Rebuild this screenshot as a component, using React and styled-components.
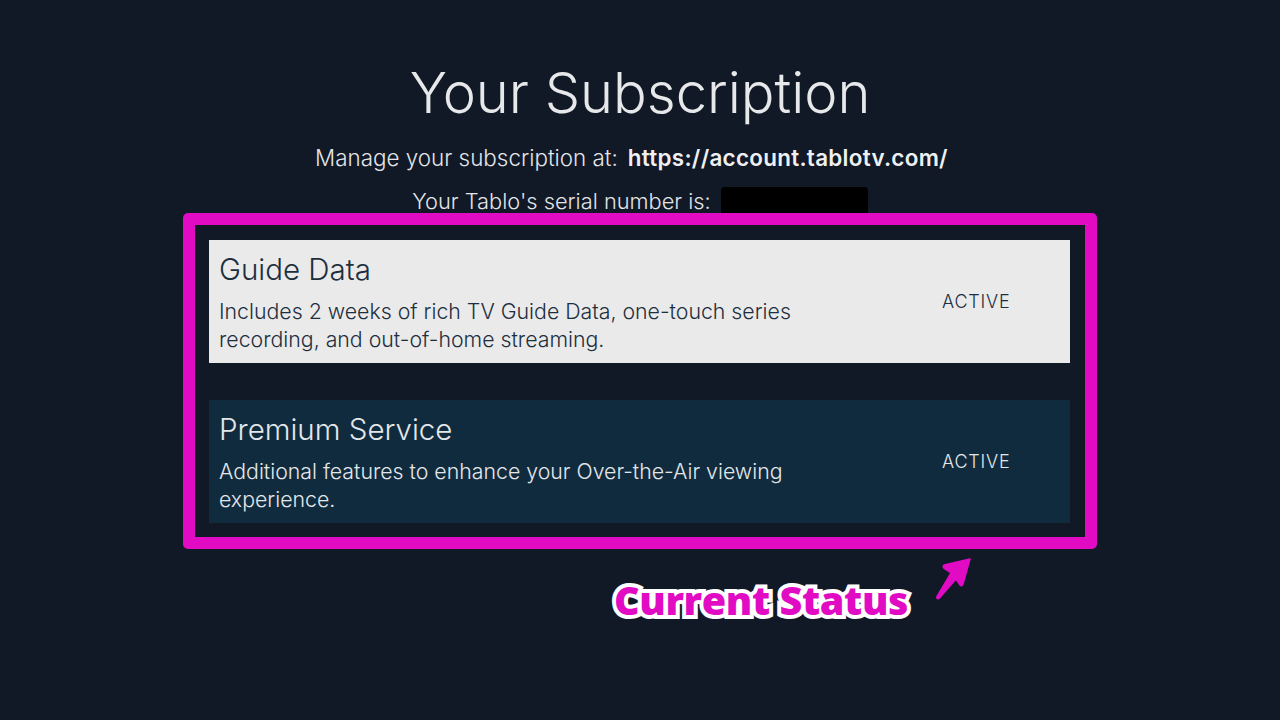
import React from "react";
import styled, { createGlobalStyle } from "styled-components";

const Global = createGlobalStyle`
  html, body { margin: 0; padding: 0; background: #111826; }
  body { font-family: Inter, "Noto Sans", sans-serif; }
`;

const Page = styled.div`
  width: 1280px;
  height: 720px;
  background: #111826;
  display: flex;
  flex-direction: column;
  align-items: center;
  overflow: hidden;
`;

const Title = styled.h1`
  margin: 55px 0 0;
  font-family: Inter, sans-serif;
  font-weight: 300;
  font-size: 56px;
  line-height: 76px;
  color: #e6e8ea;
`;

const InfoLine = styled.div`
  margin-top: ${p => p.$top}px;
  padding-right: ${p => p.$shift || 0}px;
  display: flex;
  align-items: center;
  gap: ${p => p.$gap}px;
  font-size: ${p => p.$size}px;
  line-height: 28px;
  font-weight: 300;
  color: #e3e5e8;
`;

const Url = styled.span`
  font-weight: 600;
  color: #eef0f2;
  letter-spacing: 0.3px;
`;

const Redacted = styled.span`
  display: inline-block;
  width: 147px;
  height: 28px;
  background: #000;
  border-radius: 4px;
`;

const Highlight = styled.div`
  margin-top: -2px;
  width: 861px;
  border: 12px solid #e20bc4;
  border-radius: 5px;
  padding: 15px 15px 14px 14px;
  display: flex;
  flex-direction: column;
  gap: 37px;
  position: relative;
  z-index: 1;
`;

const Card = styled.div`
  height: 123px;
  box-sizing: border-box;
  background: ${p => (p.$dark ? "#112b3e" : "#eaeaea")};
  color: ${p => (p.$dark ? "#e4e7ea" : "#1d2f3f")};
  display: flex;
  align-items: flex-start;
  padding: 12px 10px 0;
`;

const CardText = styled.div`
  flex: 1;
  display: flex;
  flex-direction: column;
`;

const CardTitle = styled.div`
  font-size: 29.5px;
  font-weight: 300;
  line-height: 34px;
`;

const CardDesc = styled.div`
  margin-top: 11px;
  font-size: 21.3px;
  font-weight: 300;
  line-height: 28px;
  max-width: 620px;
`;

const Status = styled.div`
  align-self: center;
  margin-top: -12px;
  width: 118px;
  font-size: 18px;
  font-weight: 300;
  letter-spacing: 0.8px;
`;

const Annotation = styled.div`
  align-self: stretch;
  display: flex;
  align-items: flex-start;
  margin: 26px 0 0 614px;
  gap: 21px;
`;

const Label = styled.span`
  font-family: "Open Sans", "Noto Sans", sans-serif;
  font-weight: 800;
  font-size: 39.6px;
  line-height: 50px;
  color: #e20bc4;
  -webkit-text-stroke: 8px #ffffff;
  paint-order: stroke fill;
  letter-spacing: -0.4px;
`;

const ArrowSvg = styled.svg`
  margin-top: -23px;
  flex: none;
`;

const Arrow = () => (
  <ArrowSvg width="48" height="48" viewBox="0 0 48 48">
    <path
      d="M41 7 L15 13 Q13 15 16 17 L22 21 L7.5 45.5 Q8.5 47.5 10 46.5 L27 27 L31 33 Q33 35 34 32 Z"
      fill="#e20bc4"
      stroke="#e20bc4"
      strokeWidth="1.5"
      strokeLinejoin="round"
    />
  </ArrowSvg>
);

const cards = [
  {
    title: "Guide Data",
    desc: "Includes 2 weeks of rich TV Guide Data, one-touch series recording, and out-of-home streaming.",
    dark: false,
  },
  {
    title: "Premium Service",
    desc: "Additional features to enhance your Over-the-Air viewing experience.",
    dark: true,
  },
];

export default function App() {
  return (
    <Page>
      <Global />
      <Title>Your Subscription</Title>
      <InfoLine $top={13} $gap={10} $size={22.4} $shift={17}>
        <span>Manage your subscription at:</span>
        <Url>https://account.tablotv.com/</Url>
      </InfoLine>
      <InfoLine $top={15} $gap={10} $size={21.8}>
        <span>Your Tablo's serial number is:</span>
        <Redacted />
      </InfoLine>
      <Highlight>
        {cards.map(c => (
          <Card key={c.title} $dark={c.dark}>
            <CardText>
              <CardTitle>{c.title}</CardTitle>
              <CardDesc>{c.desc}</CardDesc>
            </CardText>
            <Status>ACTIVE</Status>
          </Card>
        ))}
      </Highlight>
      <Annotation>
        <Label>Current Status</Label>
        <Arrow />
      </Annotation>
    </Page>
  );
}
